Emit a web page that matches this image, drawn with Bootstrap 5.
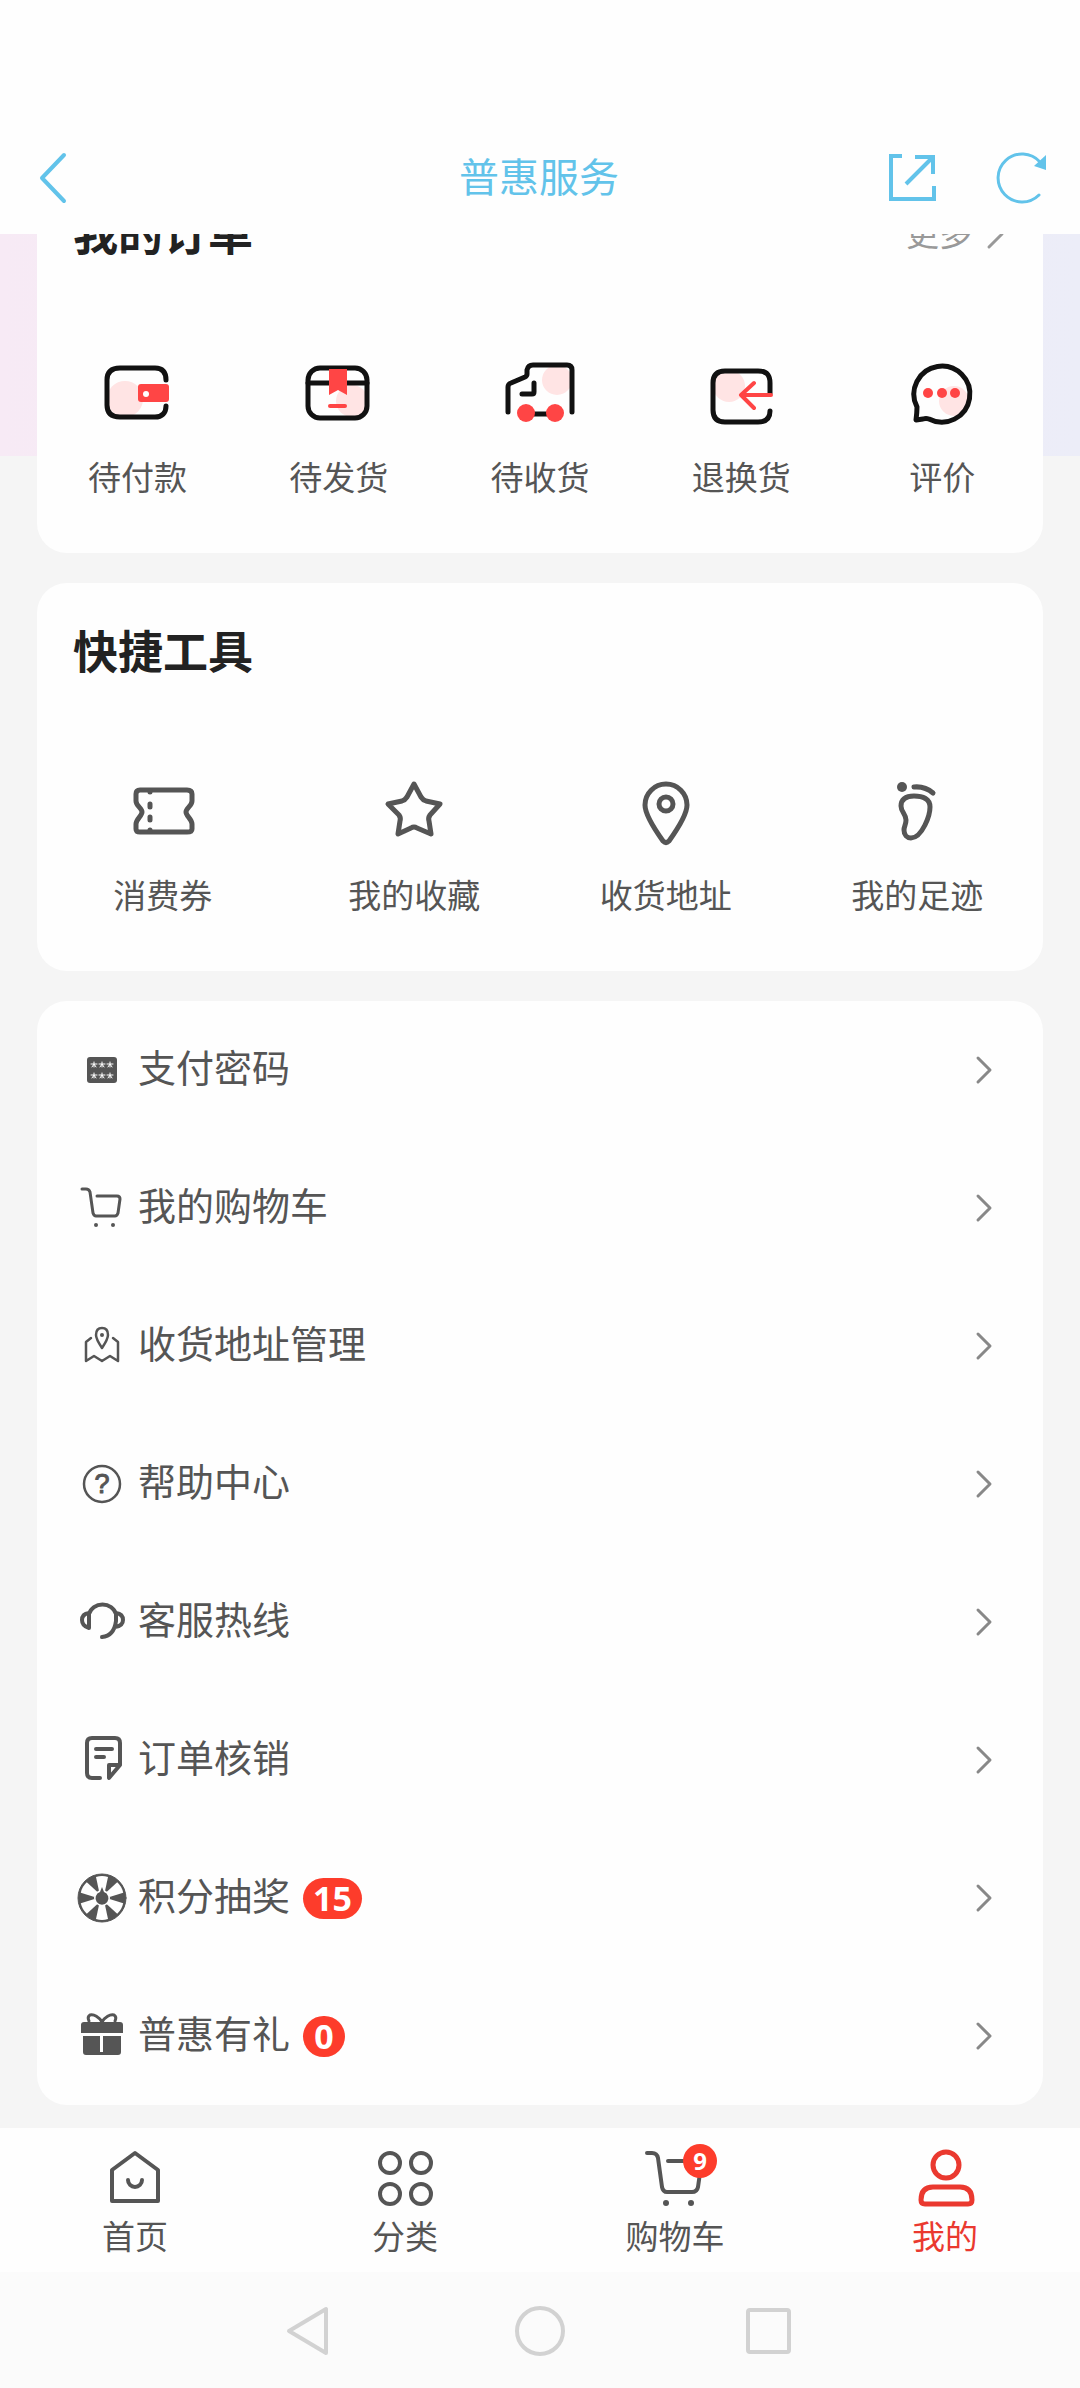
<!DOCTYPE html>
<html lang="zh-CN">
<head>
<meta charset="utf-8">
<meta name="viewport" content="width=device-width, initial-scale=1">
<title>普惠服务</title>
<link href="https://cdn.jsdelivr.net/npm/bootstrap@5.3.0/dist/css/bootstrap.min.css" rel="stylesheet">
<style>
  body { font-family: "Noto Sans", "Noto Sans CJK SC", sans-serif; background: #f5f5f5; color: #555; }
  a { color: inherit; text-decoration: none; }
  svg { display: block; flex: none; fill: none; stroke: currentColor; stroke-linecap: round; stroke-linejoin: round; }

  .app-header { position: relative; z-index: 2; background: #fefefe; color: #62c3ea; height: 234px; padding: 124px 30px 0 28px; }
  .app-title { font-size: 40px; line-height: 50px; color: #62c3ea; }
  .header-side { flex: 1 1 0; }
  .icon-btn { background: none; border: 0; padding: 0; color: inherit; }

  .page-body { position: relative; padding: 0 37px 23px; margin-top: -69px; }
  .page-body::before { content: ""; position: absolute; inset: 0 0 auto 0; height: 291px; background: linear-gradient(90deg, #f7eaf5, #ecedf8); }
  .panel { position: relative; background: #fefefe; border-radius: 30px; overflow: hidden; }
  .panel-stack { gap: 30px; }
  .panel-head { padding: 42px 34px 0 36px; height: 132px; }
  .panel-title { font-size: 45px; line-height: 54px; font-weight: 700; color: #222; }
  .more-link { font-size: 33px; line-height: 54px; color: #999; gap: 13px; }
  .entry { padding: 55px 0 52px; gap: 22px; font-size: 33px; line-height: 47px; }

  .menu-row { height: 138px; padding: 0 48px 0 40px; gap: 11px; font-size: 38px; line-height: 54px; }
  .menu-text { padding-bottom: 7px; }
  .count-pill { background: #fd3c2b; color: #fff; font-weight: 700; font-size: 34px; line-height: 41px; min-width: 42px; border-radius: 21px; padding: 0 10px; margin-left: 2px; text-align: center; }
  .go { color: #888; }

  .tab-bar { background: #fefefe; height: 144px; padding-top: 15px; font-size: 33px; line-height: 48px; }
  .tab-on { color: #ea392f; }
  .cart-count { position: absolute; left: 43px; top: 1px; width: 34px; height: 34px; border-radius: 50%; background: #fd3c2b; color: #fff; font-weight: 700; font-size: 24px; line-height: 34px; text-align: center; }
  .sys-bar { background: #fbfbfb; height: 116px; gap: 180px; color: #d2d2d2; }
</style>
</head>
<body>

<header class="app-header d-flex align-items-start">
  <div class="header-side d-flex">
    <button class="icon-btn" type="button" aria-label="返回">
      <svg width="50" height="108" viewBox="0 0 50 108" stroke-width="4"><path d="M36 31L14 54L36 77"/></svg>
    </button>
  </div>
  <h1 class="app-title fw-normal mb-0 align-self-start pt-4 mt-1">普惠服务</h1>
  <div class="header-side d-flex justify-content-end">
    <button class="icon-btn" type="button" aria-label="分享">
      <svg width="98" height="108" viewBox="0 0 98 108" stroke-width="4"><path stroke-linecap="butt" stroke-linejoin="miter" d="M16 32H5V75H48V62M29 33H47V50M20 60L46 34"/></svg>
    </button>
    <button class="icon-btn" type="button" aria-label="刷新">
      <svg width="66" height="108" viewBox="0 0 66 108" stroke-width="3"><path d="M55 71A24 24 0 1 1 56 38"/><path d="M62 31V46L50 42Z" fill="currentColor" stroke="none"/></svg>
    </button>
  </div>
</header>

<main class="page-body">
  <div class="panel-stack d-flex flex-column">

    <section class="panel">
      <div class="panel-head d-flex justify-content-between align-items-start">
        <h2 class="panel-title mb-0">我的订单</h2>
        <a class="more-link d-flex align-items-center" href="#">更多
          <svg width="24" height="32" viewBox="0 0 24 32" stroke-width="3"><path d="M4 3L17 16L4 29"/></svg>
        </a>
      </div>
      <nav class="row row-cols-5 g-0 text-center" aria-label="我的订单">
        <a class="col entry d-flex flex-column align-items-center" href="#">
          <svg width="80" height="80" viewBox="0 0 80 80" stroke-width="5"><circle cx="27" cy="47" r="18" fill="#ffe4e4" stroke="none"/><path stroke="#111" d="M68 28C68 20 64 16 57 16H22C13 16 9 20 9 28V53C9 61 13 65 22 65H57C64 65 68 61 68 54"/><rect x="40" y="32" width="31" height="18" rx="3" fill="#ff4545" stroke="none"/><circle cx="48" cy="42" r="3" fill="#fff" stroke="none"/></svg>
          待付款</a>
        <a class="col entry d-flex flex-column align-items-center" href="#">
          <svg width="80" height="80" viewBox="0 0 80 80" stroke-width="5"><circle cx="53" cy="49" r="16" fill="#ffe4e4" stroke="none"/><rect stroke="#111" x="9" y="16" width="59" height="50" rx="12"/><path stroke="#111" d="M9 31H68"/><path d="M30 17H48V43L39 38L30 43Z" fill="#ff4545" stroke="none"/><path stroke="#ff4545" stroke-width="4" d="M31 54H46"/></svg>
          待发货</a>
        <a class="col entry d-flex flex-column align-items-center" href="#">
          <svg width="80" height="80" viewBox="0 0 80 80" stroke-width="5"><circle cx="57" cy="28" r="15" fill="#ffe4e4" stroke="none"/><path stroke="#111" d="M8 60V35Q8 32 11 31L25 25Q27 24 27 22V18Q28 13 33 13H67Q72 13 72 18V60M34 31V40Q34 42 32 42H22M32 62H48"/><circle cx="26" cy="61" r="9" fill="#ff4545" stroke="none"/><circle cx="55" cy="61" r="9" fill="#ff4545" stroke="none"/></svg>
          待收货</a>
        <a class="col entry d-flex flex-column align-items-center" href="#">
          <svg width="80" height="80" viewBox="0 0 80 80" stroke-width="5"><circle cx="28" cy="34" r="16" fill="#ffe4e4" stroke="none"/><path stroke="#111" d="M69 41V31C69 22 65 19 57 19H24C16 19 12 23 12 31V58C12 66 16 70 24 70H57C64 70 69 67 69 59"/><path stroke="#ff4545" stroke-width="4" d="M70 43H41M53 31L40 43L53 56"/></svg>
          退换货</a>
        <a class="col entry d-flex flex-column align-items-center" href="#">
          <svg width="80" height="80" viewBox="0 0 80 80" stroke-width="5"><circle cx="52" cy="49" r="15" fill="#ffe4e4" stroke="none"/><path stroke="#111" d="M15 55A28 28 0 1 1 27 67Q24 66 21 67L14 68Q15 60 15 55Z"/><g fill="#ff4545" stroke="none"><circle cx="26" cy="41" r="5"/><circle cx="40" cy="41" r="5"/><circle cx="53" cy="41" r="5"/></g></svg>
          评价</a>
      </nav>
    </section>

    <section class="panel">
      <div class="panel-head">
        <h2 class="panel-title mb-0">快捷工具</h2>
      </div>
      <nav class="row row-cols-4 g-0 text-center" aria-label="快捷工具">
        <a class="col entry d-flex flex-column align-items-center" href="#">
          <svg width="80" height="80" viewBox="0 0 80 80" stroke-width="5"><path d="M17 20H64Q69 20 69 24V31C69 36 63 38 63 42S69 49 69 54V59Q69 62 64 62H17Q13 62 13 59V54C13 49 19 46 19 42S13 36 13 31V24Q13 20 17 20Z"/><path d="M27 21V22M27 34V37M27 47V50M27 60V61"/></svg>
          消费券</a>
        <a class="col entry d-flex flex-column align-items-center" href="#">
          <svg width="80" height="80" viewBox="0 0 80 80" stroke-width="5"><path d="M40 14L47 27Q49 30 52 31L66 34L56 45Q54 48 55 51L57 64L43 58Q40 56 37 58L24 64L26 51Q27 48 25 45L14 34L28 31Q31 30 33 27Z"/></svg>
          我的收藏</a>
        <a class="col entry d-flex flex-column align-items-center" href="#">
          <svg width="80" height="80" viewBox="0 0 80 80" stroke-width="5"><path d="M40 14A21 21 0 0 0 19 35C19 45 32 64 37 71Q40 74 43 71C48 64 61 45 61 35A21 21 0 0 0 40 14Z"/><circle cx="40" cy="34" r="7"/></svg>
          收货地址</a>
        <a class="col entry d-flex flex-column align-items-center" href="#">
          <svg width="80" height="80" viewBox="0 0 80 80" stroke-width="5"><circle cx="25" cy="17" r="5" fill="currentColor" stroke="none"/><path d="M37 17Q48 16 56 23"/><path d="M37 26C28 26 24 30 24 36C24 42 29 44 29 50C29 55 27 56 27 60C27 65 30 68 34 68C39 68 43 65 48 55C52 47 53 42 53 37C53 29 46 26 37 26Z"/></svg>
          我的足迹</a>
      </nav>
    </section>

    <nav class="panel" aria-label="更多服务">
      <a class="menu-row d-flex align-items-center" href="#">
        <svg width="50" height="50" viewBox="0 0 50 50"><rect x="10" y="12" width="30" height="26" rx="3" fill="currentColor" stroke="none"/><path stroke="#fff" stroke-width="1" d="M17 17V22M14 19L20 19M15 22L17 19L19 22M25 17V22M22 19H28M23 22L25 19L27 22M33 17V22M30 19H36M31 22L33 19L35 22M17 28V33M14 30H20M15 33L17 30L19 33M25 28V33M22 30H28M23 33L25 30L27 33M33 28V33M30 30H36M31 33L33 30L35 33"/></svg>
        <span class="menu-text">支付密码</span>
        <svg class="go ms-auto" width="24" height="32" viewBox="0 0 24 32" stroke-width="3"><path d="M7 4L19 16L7 28"/></svg>
      </a>
      <a class="menu-row d-flex align-items-center" href="#">
        <svg width="50" height="50" viewBox="0 0 50 50" stroke-width="3"><path d="M5 6H9Q12 6 13 9L16 30Q17 33 19 33H38Q40 33 41 30L43 16Q43 13 40 13H20"/><circle cx="19" cy="42" r="2" fill="currentColor" stroke="none"/><circle cx="36" cy="42" r="2" fill="currentColor" stroke="none"/></svg>
        <span class="menu-text">我的购物车</span>
        <svg class="go ms-auto" width="24" height="32" viewBox="0 0 24 32" stroke-width="3"><path d="M7 4L19 16L7 28"/></svg>
      </a>
      <a class="menu-row d-flex align-items-center" href="#">
        <svg width="50" height="50" viewBox="0 0 50 50" stroke-width="2.5"><path d="M14 17L9 21V40L17 35L25 40L33 35L41 40V21L36 17"/><path d="M25 7C21 7 19 10 19 14C19 18 23 24 25 27C27 24 31 18 31 14C31 10 29 7 25 7Z"/><circle cx="25" cy="14" r="2" fill="currentColor" stroke="none"/></svg>
        <span class="menu-text">收货地址管理</span>
        <svg class="go ms-auto" width="24" height="32" viewBox="0 0 24 32" stroke-width="3"><path d="M7 4L19 16L7 28"/></svg>
      </a>
      <a class="menu-row d-flex align-items-center" href="#">
        <svg width="50" height="50" viewBox="0 0 50 50" stroke-width="2.5"><circle cx="25" cy="25" r="18"/><text x="25" y="34" text-anchor="middle" font-family="Liberation Sans, sans-serif" font-size="27" fill="currentColor" stroke="currentColor" stroke-width="1">?</text></svg>
        <span class="menu-text">帮助中心</span>
        <svg class="go ms-auto" width="24" height="32" viewBox="0 0 24 32" stroke-width="3"><path d="M7 4L19 16L7 28"/></svg>
      </a>
      <a class="menu-row d-flex align-items-center" href="#">
        <svg width="50" height="50" viewBox="0 0 50 50" stroke-width="4"><path d="M12 31V17A14 13 0 0 1 39 17V24Q37 39 25 40M12 16Q5 17 5 23T12 31M39 16Q46 17 46 23T38 30"/></svg>
        <span class="menu-text">客服热线</span>
        <svg class="go ms-auto" width="24" height="32" viewBox="0 0 24 32" stroke-width="3"><path d="M7 4L19 16L7 28"/></svg>
      </a>
      <a class="menu-row d-flex align-items-center" href="#">
        <svg width="50" height="50" viewBox="0 0 50 50" stroke-width="4"><path d="M23 43H15Q10 43 10 38V8Q10 3 15 3H38Q43 3 43 8V30L32 43V30H42M19 14H35M19 22H27"/></svg>
        <span class="menu-text">订单核销</span>
        <svg class="go ms-auto" width="24" height="32" viewBox="0 0 24 32" stroke-width="3"><path d="M7 4L19 16L7 28"/></svg>
      </a>
      <a class="menu-row d-flex align-items-center" href="#">
        <svg width="50" height="50" viewBox="0 0 50 50" stroke="none"><circle cx="25" cy="25" r="24" fill="currentColor"/><g fill="#fff" stroke="none"><path d="M19 4Q25 2 31 4L28 18H22Z"/><path d="M19 4Q25 2 31 4L28 18H22Z" transform="rotate(60 25 25)"/><path d="M19 4Q25 2 31 4L28 18H22Z" transform="rotate(120 25 25)"/><path d="M19 4Q25 2 31 4L28 18H22Z" transform="rotate(180 25 25)"/><path d="M19 4Q25 2 31 4L28 18H22Z" transform="rotate(240 25 25)"/><path d="M19 4Q25 2 31 4L28 18H22Z" transform="rotate(300 25 25)"/><circle cx="25" cy="25" r="8"/></g><path fill="currentColor" stroke="none" d="M25 14L27 19A6.5 6.5 0 1 1 23 19Z"/></svg>
        <span class="menu-text">积分抽奖</span><span class="count-pill">15</span>
        <svg class="go ms-auto" width="24" height="32" viewBox="0 0 24 32" stroke-width="3"><path d="M7 4L19 16L7 28"/></svg>
      </a>
      <a class="menu-row d-flex align-items-center" href="#">
        <svg width="50" height="50" viewBox="0 0 50 50"><path fill="currentColor" stroke="none" d="M7 11H43Q46 11 46 14V22H4V14Q4 11 7 11ZM6 25H23V41H26V25H44V41Q44 44 41 44H9Q6 44 6 41Z"/><path stroke-width="3" d="M25 11C22 6 17 3 13 4Q10 6 12 10M25 11C28 6 33 3 37 4Q40 6 38 10"/></svg>
        <span class="menu-text">普惠有礼</span><span class="count-pill">0</span>
        <svg class="go ms-auto" width="24" height="32" viewBox="0 0 24 32" stroke-width="3"><path d="M7 4L19 16L7 28"/></svg>
      </a>
    </nav>
  </div>
</main>

<footer>
  <nav class="tab-bar row row-cols-4 g-0 text-center" aria-label="主导航">
    <a class="col d-flex flex-column align-items-center" href="#">
      <svg width="70" height="70" viewBox="0 0 70 70" stroke-width="4"><path d="M35 10L58 27V58H12V27Z"/><path d="M28 37A7 7 0 0 0 42 37"/></svg>
      首页</a>
    <a class="col d-flex flex-column align-items-center" href="#">
      <svg width="70" height="70" viewBox="0 0 70 70" stroke-width="4"><circle cx="20" cy="20" r="10"/><circle cx="51" cy="20" r="10"/><circle cx="20" cy="51" r="10"/><circle cx="51" cy="51" r="10"/></svg>
      分类</a>
    <a class="col d-flex flex-column align-items-center" href="#">
      <span class="position-relative">
        <svg width="70" height="70" viewBox="0 0 70 70" stroke-width="4"><path d="M7 10H12Q17 10 18 15L22 44Q23 49 27 49H52Q57 49 58 44L61 23Q61 18 57 18H28"/><circle cx="26" cy="60" r="3" fill="currentColor" stroke="none"/><circle cx="51" cy="60" r="3" fill="currentColor" stroke="none"/></svg>
        <span class="cart-count">9</span>
      </span>
      购物车</a>
    <a class="tab-on col d-flex flex-column align-items-center" href="#" aria-current="page">
      <svg width="70" height="70" viewBox="0 0 70 70" stroke-width="5"><circle cx="36" cy="22" r="13"/><path d="M23 44H50Q62 44 62 57Q62 61 58 61H15Q11 61 11 57Q11 44 23 44Z"/></svg>
      我的</a>
  </nav>
  <div class="sys-bar d-flex justify-content-center align-items-center">
    <button class="icon-btn" type="button" aria-label="系统返回"><svg width="50" height="54" viewBox="0 0 50 54" stroke-width="4"><path d="M4 28L41 6V50Z"/></svg></button>
    <button class="icon-btn" type="button" aria-label="主屏幕"><svg width="50" height="54" viewBox="0 0 50 54" stroke-width="4"><circle cx="25" cy="28" r="23"/></svg></button>
    <button class="icon-btn" type="button" aria-label="最近任务"><svg width="50" height="54" viewBox="0 0 50 54" stroke-width="4"><rect x="3" y="7" width="41" height="42" rx="2"/></svg></button>
  </div>
</footer>

<script src="https://cdn.jsdelivr.net/npm/bootstrap@5.3.0/dist/js/bootstrap.bundle.min.js"></script>
</body>
</html>
